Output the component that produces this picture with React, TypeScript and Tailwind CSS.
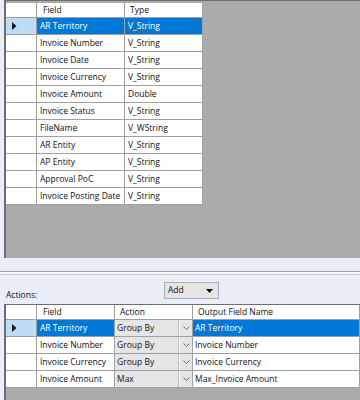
import React from 'react'

const fields = [
  ['AR Territory', 'V_String'],
  ['Invoice Number', 'V_String'],
  ['Invoice Date', 'V_String'],
  ['Invoice Currency', 'V_String'],
  ['Invoice Amount', 'Double'],
  ['Invoice Status', 'V_String'],
  ['FileName', 'V_WString'],
  ['AR Entity', 'V_String'],
  ['AP Entity', 'V_String'],
  ['Approval PoC', 'V_String'],
  ['Invoice Posting Date', 'V_String'],
]

const actions = [
  ['AR Territory', 'Group By', 'AR Territory'],
  ['Invoice Number', 'Group By', 'Invoice Number'],
  ['Invoice Currency', 'Group By', 'Invoice Currency'],
  ['Invoice Amount', 'Max', 'Max_Invoice Amount'],
]

const cell = 'h-full border-r border-b border-[#a0a0a0] flex items-center whitespace-nowrap overflow-hidden'

function RowMarker() {
  return (
    <svg width="5" height="8" viewBox="0 0 5 8" className="ml-[6px]">
      <polygon points="0,0 4.5,4 0,8" fill="#1a1a1a" />
    </svg>
  )
}

function Chevron() {
  return (
    <svg width="7" height="5" viewBox="0 0 7 5">
      <polyline points="0.5,0.5 3.5,3.5 6.5,0.5" fill="none" stroke="#6a6a6a" strokeWidth="1" />
    </svg>
  )
}

export default function App() {
  return (
    <div
      className="w-[360px] h-[400px] overflow-hidden bg-[#e9eef8] text-[8.5px] font-medium text-[#111]"
      style={{ fontFamily: '"Open Sans", "Noto Sans", sans-serif' }}
    >
      {/* Fields grid */}
      <div className="ml-[4px] h-[258px] border-l-2 border-t border-[#6e6e6e] bg-[#ababab] pt-[2px]">
        <div className="flex h-[15px]">
          <div className={`${cell} w-[31px] bg-white`} />
          <div className={`${cell} w-[88px] bg-white pl-[6px]`}>Field</div>
          <div className={`${cell} w-[78px] bg-white pl-[5px]`}>Type</div>
        </div>
        {fields.map(([name, type], i) => {
          const sel = i === 0
          return (
            <div key={name} className="flex h-[17px]">
              <div className={`${cell} w-[31px] ${sel ? 'bg-[#bfdcf5]' : 'bg-white'}`}>
                {sel && <RowMarker />}
              </div>
              <div className={`${cell} w-[88px] pl-[3px] ${sel ? 'bg-[#0078d7] text-white' : 'bg-white'}`}>{name}</div>
              <div className={`${cell} w-[78px] pl-[3px] ${sel ? 'bg-[#0078d7] text-white' : 'bg-white'}`}>{type}</div>
            </div>
          )
        })}
      </div>

      {/* splitter */}
      <div className="h-[13px]" />
      <div className="h-[1px] bg-[#9aa0a8]" />
      <div className="h-[2px] bg-[#f6f8fc]" />
      <div className="h-[1px] bg-[#c4c9d2]" />
      <div className="h-[7px]" />

      {/* Actions toolbar */}
      <div className="flex h-[22px] items-start px-[6px]">
        <div className="w-[158px] pt-[7px] leading-[12px]">Actions:</div>
        <div className="flex h-[17px] w-[55px] items-center justify-between border border-[#adadad] bg-[#e5e5e5] pl-[3px] pr-[5px]">
          <span>Add</span>
          <svg width="7" height="4" viewBox="0 0 7 4">
            <polygon points="0,0 7,0 3.5,4" fill="#111" />
          </svg>
        </div>
      </div>

      {/* Actions grid */}
      <div className="ml-[4px] h-[96px] border-l-2 border-t border-[#6e6e6e] bg-[#ababab]">
        <div className="flex h-[15px]">
          <div className={`${cell} w-[31px] bg-white`} />
          <div className={`${cell} w-[78px] bg-white pl-[6px]`}>Field</div>
          <div className={`${cell} w-[78px] bg-white pl-[5px]`}>Action</div>
          <div className={`${cell} flex-1 bg-white pl-[5px]`}>Output Field Name</div>
        </div>
        {actions.map(([field, action, output], i) => {
          const sel = i === 0
          return (
            <div key={field} className="flex h-[17px]">
              <div className={`${cell} w-[31px] ${sel ? 'bg-[#bfdcf5]' : 'bg-white'}`}>
                {sel && <RowMarker />}
              </div>
              <div className={`${cell} w-[78px] pl-[3px] ${sel ? 'bg-[#0078d7] text-white' : 'bg-white'}`}>{field}</div>
              <div className={`${cell} w-[78px] bg-[#e5e5e5]`}>
                <div className="flex h-full flex-1 items-center border-r border-[#c2c2c2] pl-[2px]">{action}</div>
                <div className="flex h-full w-[13px] items-center justify-center border-l border-[#f4f4f4]">
                  <Chevron />
                </div>
              </div>
              <div className={`${cell} flex-1 pl-[2px] ${sel ? 'bg-[#0078d7] text-white' : 'bg-white'}`}>{output}</div>
            </div>
          )
        })}
      </div>
    </div>
  )
}
